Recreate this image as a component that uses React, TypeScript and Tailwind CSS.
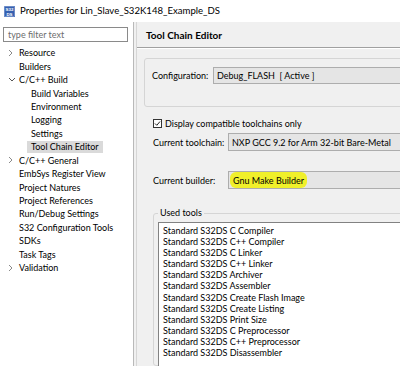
import React from "react";

type Node = { t: string; l: number; c?: "r" | "d"; sel?: boolean };

const tree: Node[] = [
  { t: "Resource", l: 0, c: "r" },
  { t: "Builders", l: 0 },
  { t: "C/C++ Build", l: 0, c: "d" },
  { t: "Build Variables", l: 1 },
  { t: "Environment", l: 1 },
  { t: "Logging", l: 1 },
  { t: "Settings", l: 1 },
  { t: "Tool Chain Editor", l: 1, sel: true },
  { t: "C/C++ General", l: 0, c: "r" },
  { t: "EmbSys Register View", l: 0 },
  { t: "Project Natures", l: 0 },
  { t: "Project References", l: 0 },
  { t: "Run/Debug Settings", l: 0 },
  { t: "S32 Configuration Tools", l: 0 },
  { t: "SDKs", l: 0 },
  { t: "Task Tags", l: 0 },
  { t: "Validation", l: 0, c: "r" },
];

const tools = [
  "Standard S32DS C Compiler",
  "Standard S32DS C++ Compiler",
  "Standard S32DS C Linker",
  "Standard S32DS C++ Linker",
  "Standard S32DS Archiver",
  "Standard S32DS Assembler",
  "Standard S32DS Create Flash Image",
  "Standard S32DS Create Listing",
  "Standard S32DS Print Size",
  "Standard S32DS C Preprocessor",
  "Standard S32DS C++ Preprocessor",
  "Standard S32DS Disassembler",
];

function Chevron({ c }: { c?: "r" | "d" }) {
  if (c === "r")
    return (
      <svg width="11" height="8" viewBox="0 0 11 8" className="shrink-0">
        <polyline points="1,1 4,4 1,7" fill="none" stroke="#8a8a8a" strokeWidth="1" />
      </svg>
    );
  if (c === "d")
    return (
      <svg width="11" height="8" viewBox="0 0 11 8" className="shrink-0">
        <polyline points="1,2 4,5 7,2" fill="none" stroke="#555" strokeWidth="1" />
      </svg>
    );
  return <span className="w-[11px] shrink-0" />;
}

export default function App() {
  return (
    <div className="w-[400px] h-[366px] overflow-hidden bg-white flex flex-col text-black font-['Lato',sans-serif] text-[9px] whitespace-nowrap">
      {/* title bar */}
      <div className="h-[22px] flex items-center shrink-0">
        <svg width="11" height="11" viewBox="0 0 11 11" className="ml-[4px] shrink-0">
          <rect x="0" y="0" width="11" height="11" fill="#3560b0" />
          <rect x="0.5" y="0.5" width="10" height="10" fill="none" stroke="#8fa8d8" strokeWidth="0.6" />
          <text x="5.5" y="4.8" fontSize="4.4" fill="#fff" textAnchor="middle" fontFamily="Liberation Sans, sans-serif" fontWeight="bold">S32</text>
          <text x="5.5" y="9.6" fontSize="4.4" fill="#fff" textAnchor="middle" fontFamily="Liberation Sans, sans-serif" fontWeight="bold">DS</text>
        </svg>
        <span className="ml-[5px] text-[9.6px] leading-none">Properties for Lin_Slave_S32K148_Example_DS</span>
      </div>

      <div className="flex flex-1 min-h-0">
        {/* left panel */}
        <div className="w-[133px] shrink-0 bg-white pt-[5px] pl-[3px]">
          <div className="w-[125px] h-[15px] border border-[#8a8a8a] flex items-center pl-[4px] text-[#6d6d6d] leading-none">
            type filter text
          </div>
          <div className="mt-[4px] -ml-[3px]">
            {tree.map((n) => (
              <div key={n.t} className="h-[13.44px] flex items-center leading-none">
                {n.l === 0 ? (
                  <div className="flex items-center pl-[8px]">
                    <Chevron c={n.c} />
                    <span>{n.t}</span>
                  </div>
                ) : n.sel ? (
                  <div className="ml-[27px] px-[4px] h-[12.5px] flex items-center bg-[#dadada]">{n.t}</div>
                ) : (
                  <div className="pl-[31px]">{n.t}</div>
                )}
              </div>
            ))}
          </div>
        </div>

        {/* sash */}
        <div className="w-px bg-[#b9b9b9] shrink-0" />
        <div className="w-[2px] bg-[#f0f0f0] shrink-0" />
        <div className="w-px bg-[#d6d6d6] shrink-0" />

        {/* right panel */}
        <div className="flex-1 min-w-0 bg-[#f0f0f0] flex flex-col overflow-hidden">
          <div className="h-[25px] shrink-0 flex items-center pl-[9px] font-bold text-[10px] leading-none">
            Tool Chain Editor
          </div>
          <div className="h-px bg-[#a0a0a0] shrink-0" />
          <div className="h-px bg-white shrink-0" />

          {/* configuration group */}
          <div className="mt-[9px] ml-[7px] w-[300px] h-[49px] shrink-0 border border-[#d5d5d5] rounded-[3px] pt-[8px] pl-[7px] flex items-start">
            <div className="w-[61px] h-[17px] flex items-center leading-none">Configuration:</div>
            <div className="w-[220px] h-[17px] border border-[#adadad] bg-[#e5e5e5] flex items-center pl-[3px] leading-none">
              Debug_FLASH&nbsp;&nbsp;[ Active ]
            </div>
          </div>

          {/* checkbox */}
          <div className="mt-[10px] ml-[16px] h-[13px] shrink-0 flex items-center leading-none">
            <svg width="9" height="9" viewBox="0 0 9 9" className="shrink-0">
              <rect x="0.5" y="0.5" width="8" height="8" fill="#fff" stroke="#333" strokeWidth="1" />
              <polyline points="2,4.5 3.8,6.3 7,2.5" fill="none" stroke="#222" strokeWidth="1" />
            </svg>
            <span className="ml-[3px]">Display compatible toolchains only</span>
          </div>

          {/* toolchain */}
          <div className="mt-[3px] ml-[16px] h-[18px] shrink-0 flex items-center leading-none">
            <div className="w-[75px] shrink-0">Current toolchain:</div>
            <div className="w-[220px] shrink-0 h-[18px] border border-[#adadad] bg-[#e5e5e5] flex items-center pl-[3px]">
              NXP GCC 9.2 for Arm 32-bit Bare-Metal
            </div>
          </div>

          {/* builder */}
          <div className="mt-[20px] ml-[16px] h-[18px] shrink-0 flex items-center leading-none">
            <div className="w-[75px] shrink-0">Current builder:</div>
            <div className="w-[220px] shrink-0 h-[18px] border border-[#adadad] bg-[#e5e5e5] flex items-center pl-[1px]">
              <span className="h-[16px] flex items-center px-[3px] bg-[#f0f02a] rounded-[6px]">Gnu Make Builder</span>
            </div>
          </div>

          {/* used tools */}
          <fieldset className="mt-[18px] ml-[16px] w-[300px] flex-1 min-h-0 border border-[#d5d5d5] rounded-[3px] pl-[4px] pt-[3px]">
            <legend className="px-[2px] leading-[12px]">Used tools</legend>
            <div className="h-[200px] w-[280px] bg-white border-l border-t border-[#828282] pl-[4px] pt-[2px]">
              {tools.map((t) => (
                <div key={t} className="h-[11.1px] leading-[11.1px]">
                  {t}
                </div>
              ))}
            </div>
          </fieldset>
        </div>
      </div>
    </div>
  );
}
